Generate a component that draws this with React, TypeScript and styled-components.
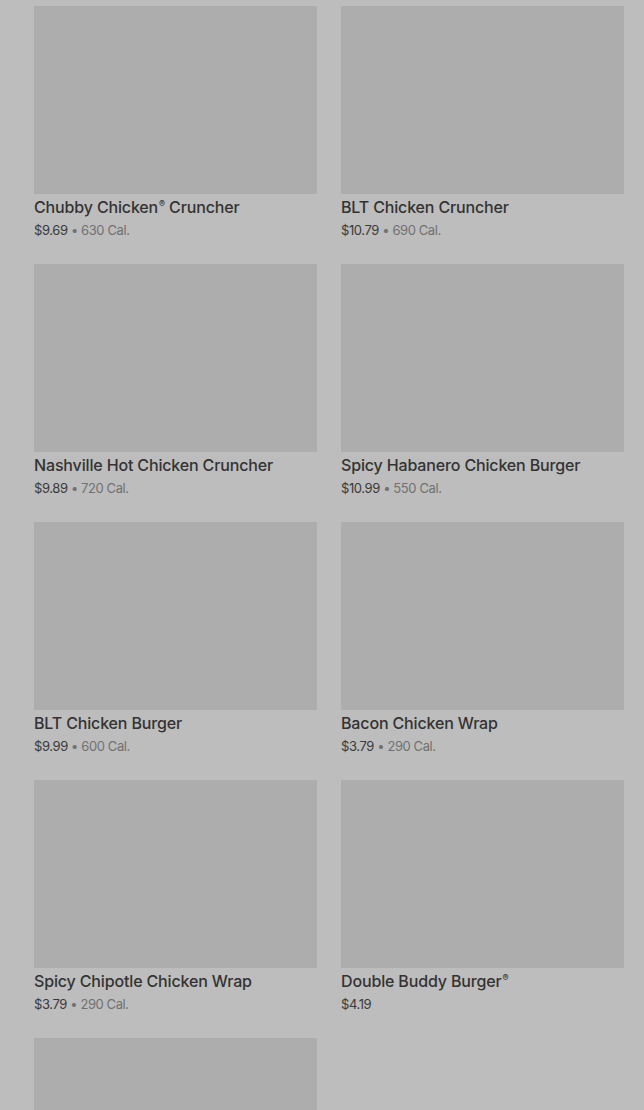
import styled, { createGlobalStyle } from "styled-components";

const GlobalStyle = createGlobalStyle`
  body {
    margin: 0;
    background: #bdbdbd;
    font-family: Inter, "Liberation Sans", sans-serif;
  }
`;

const Page = styled.div`
  width: 644px;
  height: 1110px;
  overflow: hidden;
  box-sizing: border-box;
  padding: 6px 20px 0 34px;
  background: #bdbdbd;
`;

const Grid = styled.div`
  display: grid;
  grid-template-columns: 283px 283px;
  column-gap: 24px;
  row-gap: 25px;
`;

const Card = styled.div`
  display: flex;
  flex-direction: column;
`;

const Thumb = styled.div`
  width: 100%;
  height: 188px;
  background: #adadad;
`;

const Title = styled.div`
  margin-top: 3px;
  font-size: 16px;
  line-height: 20px;
  font-weight: 500;
  color: #333333;
  letter-spacing: -0.15px;
  white-space: nowrap;
`;

const Reg = styled.sup`
  font-size: 9px;
  line-height: 0;
  vertical-align: 6px;
  margin-left: 1px;
`;

const Meta = styled.div`
  margin-top: 4px;
  font-size: 13px;
  line-height: 18px;
  color: #3a3a3a;
  letter-spacing: -0.4px;
`;

const Cal = styled.span`
  color: #717171;
`;

type Item = { name: string; reg?: boolean; rest?: string; price: string; cal?: string };

const items: Item[] = [
  { name: "Chubby Chicken", reg: true, rest: " Cruncher", price: "$9.69", cal: "630 Cal." },
  { name: "BLT Chicken Cruncher", price: "$10.79", cal: "690 Cal." },
  { name: "Nashville Hot Chicken Cruncher", price: "$9.89", cal: "720 Cal." },
  { name: "Spicy Habanero Chicken Burger", price: "$10.99", cal: "550 Cal." },
  { name: "BLT Chicken Burger", price: "$9.99", cal: "600 Cal." },
  { name: "Bacon Chicken Wrap", price: "$3.79", cal: "290 Cal." },
  { name: "Spicy Chipotle Chicken Wrap", price: "$3.79", cal: "290 Cal." },
  { name: "Double Buddy Burger", reg: true, price: "$4.19" },
  { name: "", price: "" },
];

export default function App() {
  return (
    <>
      <GlobalStyle />
      <Page>
        <Grid>
          {items.map((it, i) => (
            <Card key={i}>
              <Thumb />
              {it.name && (
                <Title>
                  {it.name}
                  {it.reg && <Reg>®</Reg>}
                  {it.rest}
                </Title>
              )}
              {it.price && (
                <Meta>
                  {it.price}
                  {it.cal && <Cal> • {it.cal}</Cal>}
                </Meta>
              )}
            </Card>
          ))}
        </Grid>
      </Page>
    </>
  );
}
